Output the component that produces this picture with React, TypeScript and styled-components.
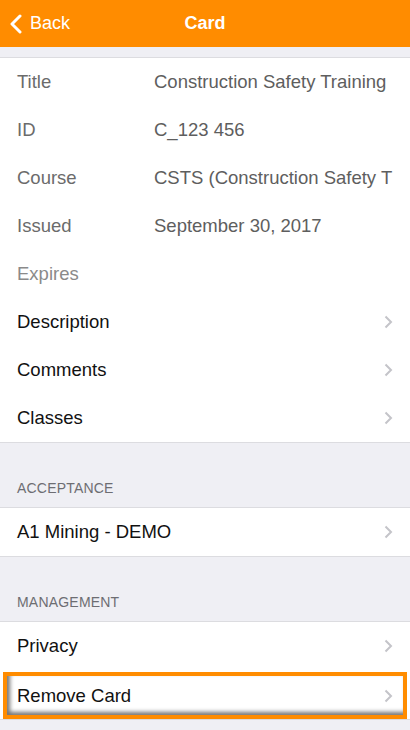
import styled, { createGlobalStyle } from "styled-components";

const GlobalStyle = createGlobalStyle`
  html, body {
    margin: 0;
    padding: 0;
    background: #efeff4;
    font-family: "Liberation Sans", Arial, sans-serif;
  }
`;

const Screen = styled.div`
  width: 410px;
  height: 730px;
  overflow: hidden;
  background: #efeff4;
  display: flex;
  flex-direction: column;
`;

const NavBar = styled.div`
  height: 47px;
  background: #ff8c00;
  display: grid;
  grid-template-columns: 1fr auto 1fr;
  align-items: center;
  color: #fff;
  flex-shrink: 0;
`;

const BackButton = styled.div`
  display: flex;
  align-items: center;
  gap: 7px;
  padding-left: 9px;
  font-size: 18px;
`;

const NavTitle = styled.div`
  font-size: 18px;
  font-weight: bold;
`;

const Spacer = styled.div<{ $h: number }>`
  height: ${(p) => p.$h}px;
  flex-shrink: 0;
`;

const Group = styled.div`
  background: #fff;
  border-top: 1px solid #dcdce0;
  border-bottom: 1px solid #dcdce0;
  display: flex;
  flex-direction: column;
`;

const SectionHeader = styled.div`
  height: 64px;
  display: flex;
  align-items: flex-end;
  padding: 0 17px 11px;
  box-sizing: border-box;
  font-size: 14px;
  color: #6d6d72;
  letter-spacing: 0.2px;
`;

const Row = styled.div<{ $highlight?: boolean }>`
  height: 48px;
  display: flex;
  align-items: center;
  box-sizing: border-box;
  padding: 0 17px;
  white-space: nowrap;
  overflow: hidden;
  ${(p) =>
    p.$highlight &&
    `
    margin: 2px 3px 0;
    height: 47px;
    padding: 0 10px 0 10px;
    border: 4px solid #ff8c00;
    box-shadow: inset 3px -3px 4px rgba(0,0,0,0.55);
  `}
`;

const Label = styled.div<{ $muted?: boolean }>`
  width: 137px;
  flex-shrink: 0;
  font-size: 18.5px;
  color: ${(p) => (p.$muted ? "#8a8a8a" : "#6b6b6b")};
`;

const Value = styled.div`
  font-size: 18.5px;
  color: #5e5e5e;
  white-space: nowrap;
`;

const LinkText = styled.div`
  flex: 1;
  font-size: 18.5px;
  color: #111;
`;

const Chevron = () => (
  <svg width="9" height="14" viewBox="0 0 9 14">
    <path d="M1.5 1.5 L7 7 L1.5 12.5" fill="none" stroke="#c4c4c9" strokeWidth="2" />
  </svg>
);

const details: [string, string, boolean?][] = [
  ["Title", "Construction Safety Training"],
  ["ID", "C_123 456"],
  ["Course", "CSTS (Construction Safety T"],
  ["Issued", "September 30, 2017"],
  ["Expires", "", true],
];

function LinkRow({ text, highlight }: { text: string; highlight?: boolean }) {
  return (
    <Row $highlight={highlight}>
      <LinkText>{text}</LinkText>
      <Chevron />
    </Row>
  );
}

export default function App() {
  return (
    <Screen>
      <GlobalStyle />
      <NavBar>
        <BackButton>
          <svg width="14" height="20" viewBox="0 0 14 20">
            <path d="M11 2 L3 10 L11 18" fill="none" stroke="#fff" strokeWidth="3" strokeLinecap="round" strokeLinejoin="round" />
          </svg>
          Back
        </BackButton>
        <NavTitle>Card</NavTitle>
        <div />
      </NavBar>
      <Spacer $h={10} />
      <Group>
        {details.map(([label, value, muted]) => (
          <Row key={label}>
            <Label $muted={muted}>{label}</Label>
            <Value>{value}</Value>
          </Row>
        ))}
        <LinkRow text="Description" />
        <LinkRow text="Comments" />
        <LinkRow text="Classes" />
      </Group>
      <SectionHeader>ACCEPTANCE</SectionHeader>
      <Group>
        <LinkRow text="A1 Mining - DEMO" />
      </Group>
      <SectionHeader>MANAGEMENT</SectionHeader>
      <Group>
        <LinkRow text="Privacy" />
        <LinkRow text="Remove Card" highlight />
      </Group>
    </Screen>
  );
}
